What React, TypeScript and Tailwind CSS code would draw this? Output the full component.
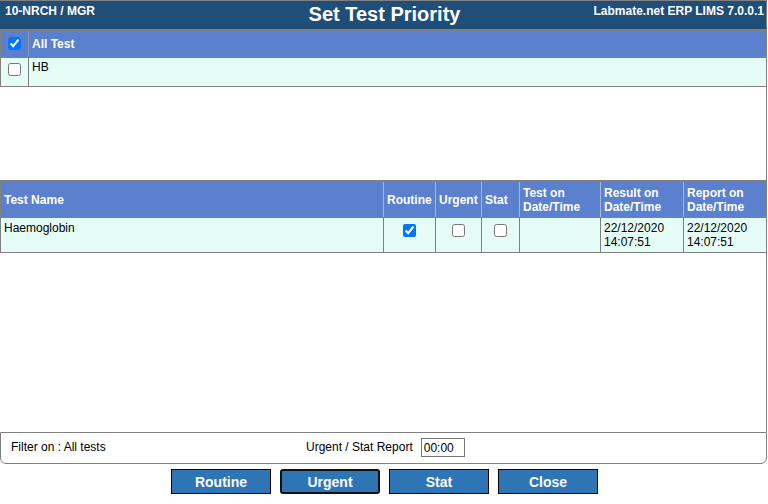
import React from "react";

const Check = ({ checked }: { checked?: boolean }) => (
  <input
    type="checkbox"
    defaultChecked={checked}
    className="block w-[13px] h-[13px] m-0"
  />
);

export default function App() {
  return (
    <div className="w-[768px] h-[504px] bg-white text-black text-[12px] font-['Liberation_Sans',Arial,sans-serif] overflow-hidden">
      <div className="w-[767px] border-r border-t border-[#808080]">
        {/* Header */}
        <div className="h-[28px] bg-[#1f4e79] text-white font-bold grid grid-cols-[1fr_auto_1fr] items-start">
          <div className="pl-[5px] pt-[3px] leading-[14px]">10-NRCH / MGR</div>
          <div className="text-[20px] leading-[23px] pt-[2px] pl-[3px]">Set Test Priority</div>
          <div className="text-right pr-[2px] pt-[3px] leading-[14px]">Labmate.net ERP LIMS 7.0.0.1</div>
        </div>

        {/* Section 1 */}
        <div className="h-[151px]">
          <div className="border-l border-t-2 border-[#808080]">
            <div className="grid grid-cols-[28px_1fr] h-[27px] border-b border-[#808080] bg-[#5a80ce]">
              <div className="pl-[7px] pt-[6px] border-r border-[#8a98b8]">
                <Check checked />
              </div>
              <div className="pl-[3px] flex items-center text-white font-bold leading-[14px]">All Test</div>
            </div>
            <div className="grid grid-cols-[28px_1fr] h-[29px] border-b border-[#808080] bg-[#e6fcf6]">
              <div className="pl-[7px] pt-[5px] border-r border-[#808080]">
                <Check />
              </div>
              <div className="pl-[3px] pt-[2px] leading-[14px]">HB</div>
            </div>
          </div>
        </div>

        {/* Section 2 */}
        <div className="h-[252px]">
          <div className="border-l border-t-2 border-[#808080]">
            <div className="grid grid-cols-[382px_52px_46px_38px_81px_83px_83px] h-[36px] border-b border-[#808080] bg-[#5a80ce] text-white font-bold leading-[14px]">
              <div className="pl-[3px] flex items-center">Test Name</div>
              <div className="pl-[3px] flex items-center border-l border-[#a8b6da]">Routine</div>
              <div className="pl-[3px] flex items-center border-l border-[#a8b6da]">Urgent</div>
              <div className="pl-[3px] flex items-center border-l border-[#a8b6da]">Stat</div>
              <div className="pl-[3px] flex items-center border-l border-[#a8b6da]">Test on<br />Date/Time</div>
              <div className="pl-[3px] flex items-center border-l border-[#a8b6da]">Result on<br />Date/Time</div>
              <div className="pl-[3px] flex items-center border-l border-[#a8b6da]">Report on<br />Date/Time</div>
            </div>
            <div className="grid grid-cols-[382px_52px_46px_38px_81px_83px_83px] h-[35px] border-b border-[#808080] bg-[#e6fcf6] leading-[14px]">
              <div className="pl-[3px] pt-[3px]">Haemoglobin</div>
              <div className="flex justify-center pt-[6px] border-l border-[#808080]"><Check checked /></div>
              <div className="flex justify-center pt-[6px] border-l border-[#808080]"><Check /></div>
              <div className="flex justify-center pt-[6px] border-l border-[#808080]"><Check /></div>
              <div className="border-l border-[#808080]"></div>
              <div className="pl-[3px] pt-[3px] border-l border-[#808080]">22/12/2020<br />14:07:51</div>
              <div className="pl-[3px] pt-[3px] border-l border-[#808080]">22/12/2020<br />14:07:51</div>
            </div>
          </div>
        </div>
      </div>

      {/* Bottom panel */}
      <div className="w-[767px] h-[32px] border border-[#808080] rounded-b-[6px] flex items-center leading-[14px]">
        <div className="w-[305px] pl-[10px] -mt-[2px]">Filter on : All tests</div>
        <div className="-mt-[2px]">Urgent / Stat Report</div>
        <input
          defaultValue="00:00"
          className="ml-[8px] w-[44px] h-[19px] border border-[#767676] px-[2px] text-[12px] leading-[14px] font-['Liberation_Sans',Arial,sans-serif] -mt-[1px]"
        />
      </div>

      {/* Buttons */}
      <div className="mt-[5px] flex justify-center gap-[9px] pl-[1px]">
        <button className="w-[100px] h-[25px] bg-[#2e75b6] border border-black text-white font-bold text-[14px] leading-[16px]">Routine</button>
        <button className="w-[100px] h-[25px] bg-[#2e75b6] border-2 border-[#101010] rounded-[3px] text-white font-bold text-[14px] leading-[16px]">Urgent</button>
        <button className="w-[100px] h-[25px] bg-[#2e75b6] border border-black text-white font-bold text-[14px] leading-[16px]">Stat</button>
        <button className="w-[100px] h-[25px] bg-[#2e75b6] border border-black text-white font-bold text-[14px] leading-[16px]">Close</button>
      </div>
    </div>
  );
}
